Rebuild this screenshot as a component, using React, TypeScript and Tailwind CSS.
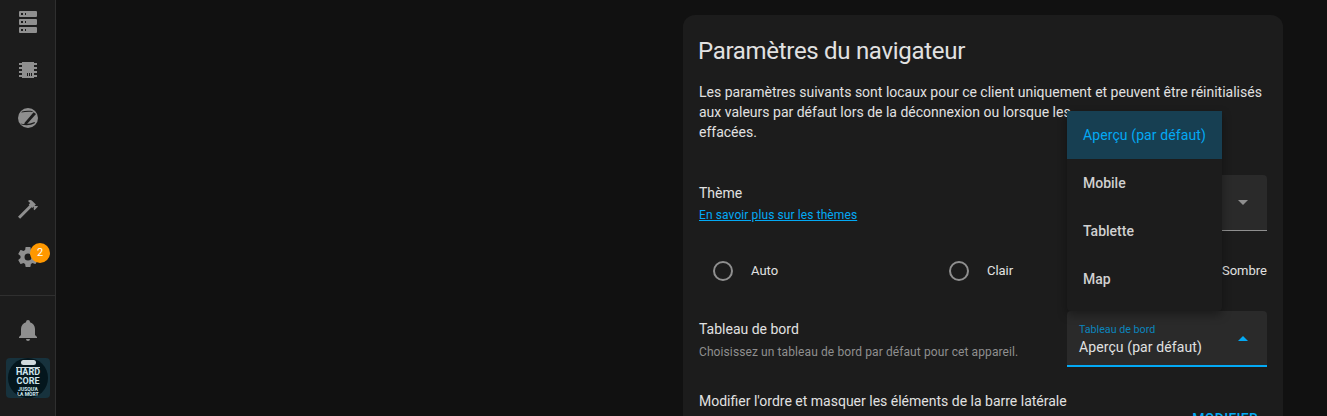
const paths = {
	server:
		"M4,1H20A1,1 0 0,1 21,2V6A1,1 0 0,1 20,7H4A1,1 0 0,1 3,6V2A1,1 0 0,1 4,1M4,9H20A1,1 0 0,1 21,10V14A1,1 0 0,1 20,15H4A1,1 0 0,1 3,14V10A1,1 0 0,1 4,9M4,17H20A1,1 0 0,1 21,18V22A1,1 0 0,1 20,23H4A1,1 0 0,1 3,22V18A1,1 0 0,1 4,17M9,5H10V3H9V5M9,13H10V11H9V13M9,21H10V19H9V21M5,3V5H7V3H5M5,11V13H7V11H5M5,19V21H7V19H5Z",
	chip: "M6,4H18V5H21V7H18V9H21V11H18V13H21V15H18V17H21V19H18V20H6V19H3V17H6V15H3V13H6V11H3V9H6V7H3V5H6V4M11,15V18H12V15H11M13,15V18H14V15H13M15,15V18H16V15H15Z",
	hammer:
		"M2 19.63L13.43 8.2L12.72 7.5L14.14 6.07L12 3.89C13.2 2.7 15.09 2.7 16.27 3.89L19.87 7.5L18.45 8.91H21.29L22 9.62L18.45 13.21L17.74 12.5V9.62L16.27 11.04L15.56 10.33L4.13 21.76L2 19.63Z",
	cog: "M12,15.5A3.5,3.5 0 0,1 8.5,12A3.5,3.5 0 0,1 12,8.5A3.5,3.5 0 0,1 15.5,12A3.5,3.5 0 0,1 12,15.5M19.43,12.97C19.47,12.65 19.5,12.33 19.5,12C19.5,11.67 19.47,11.34 19.43,11L21.54,9.37C21.73,9.22 21.78,8.95 21.66,8.73L19.66,5.27C19.54,5.05 19.27,4.96 19.05,5.05L16.56,6.05C16.04,5.66 15.5,5.32 14.87,5.07L14.5,2.42C14.46,2.18 14.25,2 14,2H10C9.75,2 9.54,2.18 9.5,2.42L9.13,5.07C8.5,5.32 7.96,5.66 7.44,6.05L4.95,5.05C4.73,4.96 4.46,5.05 4.34,5.27L2.34,8.73C2.21,8.95 2.27,9.22 2.46,9.37L4.57,11C4.53,11.34 4.5,11.67 4.5,12C4.5,12.33 4.53,12.65 4.57,12.97L2.46,14.63C2.27,14.78 2.21,15.05 2.34,15.27L4.34,18.73C4.46,18.95 4.73,19.03 4.95,18.95L7.44,17.94C7.96,18.34 8.5,18.68 9.13,18.93L9.5,21.58C9.54,21.82 9.75,22 10,22H14C14.25,22 14.46,21.82 14.5,21.58L14.87,18.93C15.5,18.67 16.04,18.34 16.56,17.94L19.05,18.95C19.27,19.03 19.54,18.95 19.66,18.73L21.66,15.27C21.78,15.05 21.73,14.78 21.54,14.63L19.43,12.97Z",
	bell: "M21,19V20H3V19L5,17V11C5,7.9 7.03,5.17 10,4.29C10,4.19 10,4.1 10,4A2,2 0 0,1 12,2A2,2 0 0,1 14,4C14,4.1 14,4.19 14,4.29C16.97,5.17 19,7.9 19,11V17L21,19M14,21A2,2 0 0,1 12,23A2,2 0 0,1 10,21",
};

function NavIcon({ d }: { d: string }) {
	return (
		<div className="h-12 flex items-center justify-center">
			<svg viewBox="0 0 24 24" className="w-6 h-6 fill-[#8f8f8f]">
				<path d={d} />
			</svg>
		</div>
	);
}

function ZigbeeIcon() {
	return (
		<div className="h-12 flex items-center justify-center">
			<svg viewBox="0 0 24 24" className="w-6 h-6">
				<circle cx="12" cy="12" r="10" fill="#8f8f8f" />
				<path d="M8 17.6L17.6 6.2L20 8L10.6 18.4Z" fill="#1c1c1c" />
				<path d="M6 5.6C9 4.6 13 4.4 17 5.2L16.2 6C13 5.6 9 5.8 5.2 6.6Z" fill="#1c1c1c" />
				<path d="M4.4 17.4L5.6 18.6C10 19.8 15 19.4 19 17L18.6 16C14 18 9 18.4 4.4 17.4Z" fill="#1c1c1c" />
			</svg>
		</div>
	);
}

function Avatar() {
	return (
		<div className="ml-[6px] mt-1 w-[44px] h-[40px] rounded-[4px] bg-[#17323d] flex items-center justify-center">
			<div className="w-[40px] h-[40px] rounded-full bg-[#04161d] flex flex-col items-center text-[#cfe6ee] font-bold overflow-hidden">
				<div className="w-[15px] h-[5px] mt-[2px] rounded-sm bg-[#cfd9dc]" />
				<div className="w-[24px] h-px mt-[2px] bg-[#cfd9dc]" />
				<span className="text-[9px] leading-[9px]">HARD</span>
				<span className="text-[9px] leading-[9px]">CORE</span>
				<span className="text-[5px] leading-[5px] mt-[1px]">JUSQU'A</span>
				<span className="text-[5px] leading-[5px]">LA MORT</span>
			</div>
		</div>
	);
}

function Sidebar() {
	return (
		<aside className="w-[56px] shrink-0 h-full bg-[#1c1c1c] border-r border-[#2f2f2f] overflow-hidden">
			<div className="-mt-[2px]">
				<NavIcon d={paths.server} />
				<NavIcon d={paths.chip} />
				<ZigbeeIcon />
			</div>
			<div className="h-[43px]" />
			<NavIcon d={paths.hammer} />
			<div className="relative">
				<NavIcon d={paths.cog} />
				<span className="absolute left-[30px] top-[10px] w-5 h-5 rounded-full bg-[#ff9800] text-white text-[11px] flex items-center justify-center">
					2
				</span>
			</div>
			<div className="h-px mt-[14px] mb-[10px] bg-[#2f2f2f]" />
			<NavIcon d={paths.bell} />
			<Avatar />
		</aside>
	);
}

function Caret({ up, active }: { up?: boolean; active?: boolean }) {
	return (
		<svg viewBox="0 0 10 5" className={`w-[10px] h-[5px] ${active ? "fill-[#03a9f4]" : "fill-[#8f8f8f]"}`}>
			<path d={up ? "M0 5L5 0L10 5Z" : "M0 0L5 5L10 0Z"} />
		</svg>
	);
}

function Radio({ label }: { label: string }) {
	return (
		<div className="flex items-center">
			<div className="w-12 h-12 flex items-center justify-center">
				<div className="w-5 h-5 rounded-full border-2 border-[#8f8f8f]" />
			</div>
			<span className="ml-1 text-[13px] text-[#e1e1e1]">{label}</span>
		</div>
	);
}

function ThemeRow() {
	return (
		<div className="flex items-start justify-between h-[72px]">
			<div className="pt-4">
				<div className="text-sm leading-5 text-[#e1e1e1]">Thème</div>
				<a className="block mt-[2px] text-xs leading-5 tracking-[0.1px] text-[#03a9f4] underline">En savoir plus sur les thèmes</a>
			</div>
			<div className="mt-2 w-[200px] h-14 bg-[#2a2a2a] rounded-t border-b border-[#8f8f8f] flex items-center justify-end pr-[19px]">
				<Caret />
			</div>
		</div>
	);
}

function DashboardRow() {
	return (
		<div className="flex items-start justify-between h-[72px]">
			<div className="pt-4">
				<div className="text-sm leading-5 text-[#e1e1e1]">Tableau de bord</div>
				<div className="mt-[3px] text-xs leading-5 tracking-[0.1px] text-[#8f8f8f]">Choisissez un tableau de bord par défaut pour cet appareil.</div>
			</div>
			<div className="mt-2 w-[200px] h-14 bg-[#2a2a2a] rounded-t border-b-2 border-[#03a9f4] flex items-center justify-between pl-3 pr-[19px]">
				<div className="pt-1">
					<div className="text-[10.7px] leading-3 text-[#0a85bd]">Tableau de bord</div>
					<div className="text-sm leading-5 mt-[1px] tracking-[0.1px] text-[#e1e1e1]">Aperçu (par défaut)</div>
				</div>
				<Caret up active />
			</div>
		</div>
	);
}

function DashboardMenu() {
	return (
		<div className="absolute left-[384px] top-[96px] w-[155px] pb-2 bg-[#1c1c1c] rounded-b shadow-[0_4px_10px_rgba(0,0,0,0.35)] text-sm font-medium text-[#d0d0d0]">
			<div className="h-12 pl-4 flex items-center bg-[#173f52] text-[#03a9f4] font-normal tracking-[0.1px]">Aperçu (par défaut)</div>
			<div className="h-12 pl-4 flex items-center">Mobile</div>
			<div className="h-12 pl-4 flex items-center">Tablette</div>
			<div className="h-12 pl-4 flex items-center">Map</div>
		</div>
	);
}

export default function App() {
	return (
		<div className="w-[1327px] h-[416px] overflow-hidden flex bg-[#111111] font-['Roboto',sans-serif]">
			<Sidebar />
			<main className="pl-[627px] pt-[15px]">
				<section className="relative w-[600px] rounded-xl bg-[#1c1c1c] px-4 pt-5 pb-4">
					<h1 className="-ml-px text-2xl leading-8 tracking-[-0.3px] text-[#e1e1e1]">Paramètres du navigateur</h1>
					<p className="mt-[15px] text-sm leading-5 text-[#e1e1e1]">
						Les paramètres suivants sont locaux pour ce client uniquement et peuvent être réinitialisés
						<br />
						aux valeurs par défaut lors de la déconnexion ou lorsque les
						<br />
						effacées.
					</p>
					<div className="mt-[25px]">
						<ThemeRow />
						<div className="h-16 flex items-center justify-between">
							<Radio label="Auto" />
							<Radio label="Clair" />
							<Radio label="Sombre" />
						</div>
						<DashboardRow />
						<div className="flex items-start justify-between h-[60px]">
							<span className="pt-4 text-sm leading-5 text-[#e1e1e1]">Modifier l'ordre et masquer les éléments de la barre latérale</span>
							<span className="pt-[34px] pr-[9px] text-sm leading-5 font-medium tracking-[0.3px] text-[#03a9f4]">MODIFIER</span>
						</div>
					</div>
					<DashboardMenu />
				</section>
			</main>
		</div>
	);
}
